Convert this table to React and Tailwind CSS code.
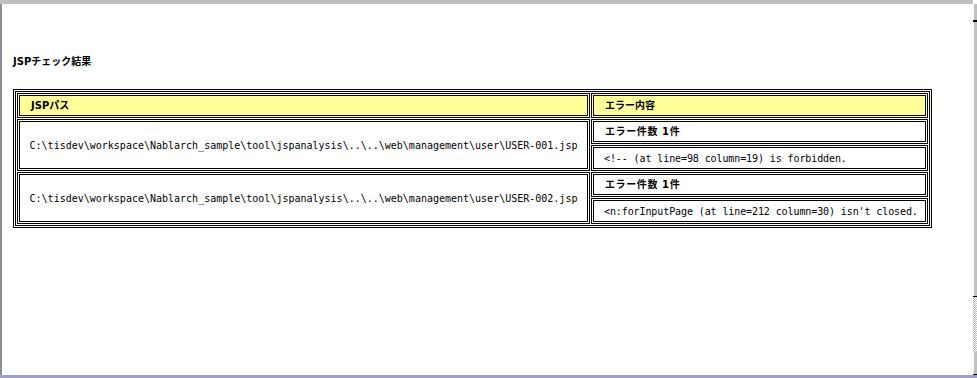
import React from "react";

const jp = { fontFamily: '"DejaVu Sans", "Noto Sans CJK JP", sans-serif' };
const mono = "font-['DejaVu_Sans_Mono','Noto_Sans_CJK_JP',monospace]";

function Box({ children, bold, h }) {
  return (
    <div
      className={`border-[3px] border-double border-black flex items-center text-[10px] text-black whitespace-nowrap ${bold ? "font-bold pl-[11px] tracking-[0.6px]" : `${mono} pl-[10px] tracking-[-0.1px]`} ${h}`}
    >
      {children}
    </div>
  );
}

function DataRow({ path, msg }) {
  return (
    <tr>
      <td className={`border-[3px] border-double border-black p-0 h-[52px] text-center align-middle text-[10px] text-black ${mono}`}>
        {path}
      </td>
      <td className="p-0 align-top">
        <div className="flex flex-col gap-[1px]">
          <Box bold h="h-[25px]">エラー件数 1件</Box>
          <Box h="h-[26px]">{msg}</Box>
        </div>
      </td>
    </tr>
  );
}

export default function App() {
  return (
    <div className="w-[977px] h-[378px] bg-white flex flex-col overflow-hidden" style={jp}>
      <div className="h-[4px] bg-[#c0c0c0] shrink-0 mr-[4px]" />
      <div className="flex flex-1 min-h-0">
        <div className="w-[2px] bg-[#8c8c9c] shrink-0" />
        <div className="flex-1 pl-[11px]">
          <div className="pt-[52px] h-[85px] text-[10px] font-bold text-black leading-[12px]">
            JSPチェック結果
          </div>
          <table className="border-separate border-spacing-[1px] border-[3px] border-double border-black w-[919px] table-fixed">
            <colgroup>
              <col className="w-[573px]" />
              <col className="w-[337px]" />
            </colgroup>
            <tbody>
              <tr>
                <td className="border-[3px] border-double border-black bg-[#ffff99] h-[25px] p-0 pl-[11px] text-[10px] font-bold text-black align-middle">
                  JSPパス
                </td>
                <td className="border-[3px] border-double border-black bg-[#ffff99] h-[25px] p-0 pl-[11px] text-[10px] font-bold text-black align-middle">
                  エラー内容
                </td>
              </tr>
              <DataRow
                path={"C:\\tisdev\\workspace\\Nablarch_sample\\tool\\jspanalysis\\..\\..\\web\\management\\user\\USER-001.jsp"}
                msg={"<!-- (at line=98 column=19) is forbidden."}
              />
              <DataRow
                path={"C:\\tisdev\\workspace\\Nablarch_sample\\tool\\jspanalysis\\..\\..\\web\\management\\user\\USER-002.jsp"}
                msg={"<n:forInputPage (at line=212 column=30) isn't closed."}
              />
            </tbody>
          </table>
        </div>
        <div className="w-[4px] shrink-0 flex flex-col">
          <div className="h-[16px] bg-[#c0c0c0] border-l border-white" />
          <div className="h-[2px] bg-black" />
          <div className="h-[274px] bg-[#c0c0c0] border-l border-white" />
          <div className="h-[1px] bg-black" />
          <div className="flex-1 bg-[repeating-conic-gradient(#c0c0c0_0_25%,#ffffff_0_50%)] bg-[length:2px_2px]" />
          <div className="h-[22px] bg-[#c0c0c0] border-l border-white" />
          <div className="h-[1px] bg-black" />
        </div>
      </div>
      <div className="h-[3px] bg-[#a0a0d0] shrink-0" />
    </div>
  );
}
